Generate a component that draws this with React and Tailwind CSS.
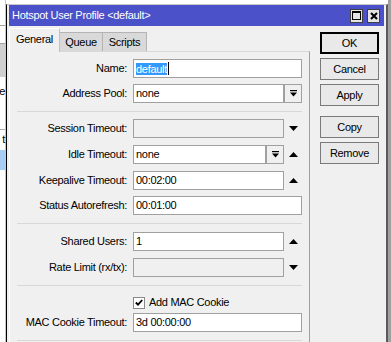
import React from 'react';

const Up = () => (
  <svg width="9" height="5" viewBox="0 0 9 5"><path d="M0 5 L4.5 0 L9 5 Z" fill="#000" /></svg>
);
const Down = () => (
  <svg width="9" height="5" viewBox="0 0 9 5"><path d="M0 0 L9 0 L4.5 5 Z" fill="#000" /></svg>
);

// dropdown button: bar over a down triangle
const DropBtn = () => (
  <div className="flex h-full w-[18px] items-center justify-center border border-[#a0a0a0] bg-[#f0f0f0]">
    <svg width="7" height="7" viewBox="0 0 7 7">
      <rect x="0" y="0" width="7" height="1.2" fill="#000" />
      <path d="M0 2.5 L7 2.5 L3.5 6.5 Z" fill="#000" />
    </svg>
  </div>
);

const Arrow = ({ dir }) => (
  <div className="flex h-full w-[18px] items-center justify-center">
    {dir === 'up' && <Up />}
    {dir === 'down' && <Down />}
  </div>
);

const Input = ({ value, disabled, className = '' }) => (
  <div
    className={`h-full border border-[#a0a0a0] px-[2px] leading-[17px] whitespace-nowrap overflow-hidden ${disabled ? 'bg-[#f0f0f0]' : 'bg-white'} ${className}`}
  >
    {value}
  </div>
);

const Row = ({ label, children, className = '' }) => (
  <div className={`flex h-[19px] items-center ${className}`}>
    <div className="w-[110px] text-right whitespace-nowrap">{label}</div>
    <div className="ml-[6px] flex h-full flex-1">{children}</div>
  </div>
);

const Sep = ({ className = '' }) => <div className={`border-t border-[#d8d8d8] ${className}`} />;

const Btn = ({ children, primary, className = '' }) => (
  <div
    className={`flex h-[22px] items-center justify-center bg-[#e9e9e9] ${primary ? 'border-2 border-black' : 'border border-[#7a7a7a]'} ${className}`}
  >
    {children}
  </div>
);

export default function App() {
  return (
    <div className="relative h-[342px] w-[391px] overflow-hidden bg-white font-[family-name:'Liberation_Sans',Arial,sans-serif] text-[11px] tracking-[-0.3px] text-black">
      {/* app behind the dialog */}
      <div className="flex h-full w-[6px] flex-col border-r border-[#c8c8c8]">
        <div className="h-[25px]" />
        <div className="h-[18px] border-t border-[#a0a0a0]" />
        <div className="h-[34px] border-t border-[#a0a0a0] bg-[#d0d0d0]" />
        <div className="flex h-[52px] items-start justify-end pt-[9px] leading-[11px]">e</div>
        <div className="h-[21px] border-t border-[#b0b0b0] pt-[4px] text-right leading-[11px]">t</div>
        <div className="h-[20px] bg-[#a9ccf4]" />
      </div>
      <div className="absolute top-0 right-0 h-full w-[3px] bg-[#a0a0a0]" />

      {/* dialog window */}
      <div className="absolute top-[4px] left-[6px] flex h-[338px] w-[382px] flex-col border-t border-l border-r-2 border-t-[#c8c8c8] border-l-black border-r-[#5a5a5a] bg-[#f0f0f0] px-[2px]">
        <div className="flex h-[21px] items-center justify-between bg-[#4b51c9] pr-[4px] pl-[3px] text-white">
          <span>Hotspot User Profile &lt;default&gt;</span>
          <div className="flex gap-[4px]">
            <div className="flex h-[14px] w-[13px] items-center justify-center border border-[#404040] bg-[#e4e4e4]">
              <div className="h-[9px] w-[9px] border border-t-2 border-black" />
            </div>
            <div className="flex h-[14px] w-[13px] items-center justify-center border border-[#404040] bg-[#e4e4e4]">
              <svg width="8" height="8" viewBox="0 0 8 8">
                <path d="M1 1 L7 7 M7 1 L1 7" stroke="#000" strokeWidth="2" />
              </svg>
            </div>
          </div>
        </div>

        <div className="flex flex-1 pt-[2px]">
          {/* tabs + panel */}
          <div className="flex w-[301px] flex-col">
            <div className="flex h-[23px] items-end">
              <div className="relative z-10 -mb-px flex h-[24px] w-[51px] items-center justify-center border-t border-l border-r border-t-white border-l-white border-r-[#c0c0c0] bg-[#f0f0f0] pb-[2px]">
                General
              </div>
              <div className="flex h-[19px] w-[43px] items-center justify-center border-t border-r border-[#b4b4b4] bg-[#d9d9d9]">
                Queue
              </div>
              <div className="flex h-[19px] w-[44px] items-center justify-center border-t border-r border-[#b4b4b4] bg-[#d9d9d9]">
                Scripts
              </div>
            </div>
            <div className="flex-1 border-t border-r border-l border-t-[#d8d8d8] border-r-[#a0a0a0] border-l-white px-[7px] pt-[7px]">
              <Row label="Name:">
                <div className="h-full flex-1 border border-[#a0a0a0] bg-white px-[2px] leading-[17px]">
                  <span className="bg-[#3399ff] text-white">default</span>
                  <span className="ml-px inline-block h-[13px] w-px translate-y-[2px] bg-black" />
                </div>
              </Row>
              <Row label="Address Pool:" className="mt-[6px]">
                <Input value="none" className="flex-1" />
                <DropBtn />
              </Row>
              <Sep className="mt-[8px]" />
              <Row label="Session Timeout:" className="mt-[7px]">
                <Input disabled className="flex-1" />
                <Arrow dir="down" />
              </Row>
              <Row label="Idle Timeout:" className="mt-[7px]">
                <Input value="none" className="flex-1" />
                <DropBtn />
                <Arrow dir="up" />
              </Row>
              <Row label="Keepalive Timeout:" className="mt-[7px]">
                <Input value="00:02:00" className="flex-1" />
                <Arrow dir="up" />
              </Row>
              <Row label="Status Autorefresh:" className="mt-[6px]">
                <Input value="00:01:00" className="flex-1" />
              </Row>
              <Sep className="mt-[8px]" />
              <Row label="Shared Users:" className="mt-[8px]">
                <Input value="1" className="flex-1" />
                <Arrow dir="up" />
              </Row>
              <Row label="Rate Limit (rx/tx):" className="mt-[7px]">
                <Input disabled className="flex-1" />
                <Arrow dir="down" />
              </Row>
              <Sep className="mt-[8px]" />
              <div className="mt-[10px] flex h-[13px] items-center pl-[116px]">
                <div className="flex h-[12px] w-[12px] items-center justify-center border border-[#8a8a8a] bg-white">
                  <svg width="8" height="7" viewBox="0 0 8 7">
                    <path d="M0.8 3.5 L3 5.7 L7.2 1" stroke="#000" strokeWidth="1.8" fill="none" />
                  </svg>
                </div>
                <span className="ml-[4px]">Add MAC Cookie</span>
              </div>
              <Row label="MAC Cookie Timeout:" className="mt-[4px]">
                <Input value="3d 00:00:00" className="flex-1" />
              </Row>
              <Sep className="mt-[8px]" />
            </div>
          </div>

          {/* buttons */}
          <div className="ml-[10px] flex w-[59px] flex-col pt-[4px]">
            <Btn primary>OK</Btn>
            <Btn className="mt-[4px]">Cancel</Btn>
            <Btn className="mt-[4px]">Apply</Btn>
            <Btn className="mt-[10px]">Copy</Btn>
            <Btn className="mt-[4px]">Remove</Btn>
          </div>
        </div>
      </div>
    </div>
  );
}
